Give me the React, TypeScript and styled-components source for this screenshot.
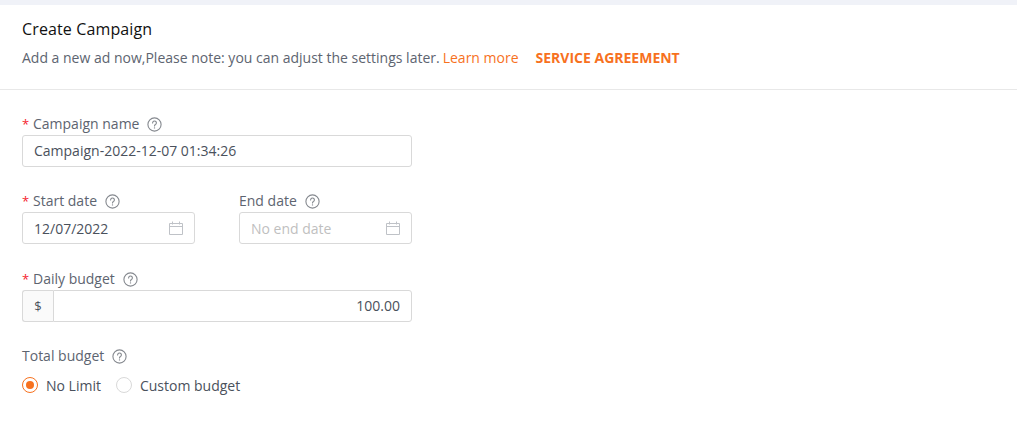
import { createGlobalStyle, styled } from "styled-components";

const GlobalStyle = createGlobalStyle`
  html, body { margin: 0; padding: 0; background: #fff; }
  body { font-family: "Open Sans", "Liberation Sans", sans-serif; font-size: 14px; color: #5d6470; }
`;

const Page = styled.div`
  width: 1017px;
  height: 422px;
  overflow: hidden;
  box-sizing: border-box;
  border-top: 5px solid #f0f2f8;
`;

const Header = styled.header`
  height: 85px;
  box-sizing: border-box;
  padding: 13px 22px 0;
  border-bottom: 1px solid #e8e8e8;
`;

const Title = styled.h1`
  margin: 0;
  font-size: 16px;
  font-weight: 400;
  line-height: 22px;
  letter-spacing: 0.13px;
  color: #111;
`;

const Subtitle = styled.p`
  margin: 7px 0 0;
  line-height: 22px;
  color: #5d6470;
`;

const Link = styled.a`
  color: #f7711e;
  margin-left: 3px;
`;

const Agreement = styled.a`
  color: #f7711e;
  font-weight: 700;
  margin-left: 17px;
`;

const Form = styled.form`
  width: 390px;
  padding: 23px 0 0 22px;
  display: flex;
  flex-direction: column;
  gap: 23px;
`;

const Row = styled.div`
  display: grid;
  grid-template-columns: 173px 173px;
  column-gap: 44px;
  margin-bottom: 1px;
`;

const Field = styled.div`
  display: flex;
  flex-direction: column;
`;

const Label = styled.label<{ $required?: boolean }>`
  display: flex;
  align-items: center;
  height: 22px;
  line-height: 22px;
  color: #5d6470;
  &::before {
    content: ${(p) => (p.$required ? '"*"' : "none")};
    color: #f5222d;
    width: 11px;
    font-size: 13px;
  }
`;

const HelpIcon = styled.svg`
  width: 15px;
  height: 15px;
  margin-left: 8px;
  color: #85898f;
`;

const InputBox = styled.div<{ $placeholder?: boolean; $right?: boolean; $date?: boolean }>`
  height: 32px;
  box-sizing: border-box;
  display: flex;
  align-items: center;
  justify-content: ${(p) => (p.$right ? "flex-end" : "space-between")};
  padding: ${(p) => (p.$date ? "1px 11px 0" : "0 11px")};
  border: 1px solid #d9d9d9;
  border-radius: 3px;
  line-height: 30px;
  color: ${(p) => (p.$placeholder ? "#bfbfbf" : "#4a515c")};
  background: #fff;
`;

const CalendarIcon = styled.svg`
  width: 14px;
  height: 14px;
  margin-top: -2px;
  color: #bfc2c7;
`;

const InputGroup = styled.div`
  display: flex;
  height: 32px;
`;

const Addon = styled.span`
  width: 31px;
  flex: none;
  box-sizing: border-box;
  display: flex;
  align-items: center;
  justify-content: center;
  background: #fafafa;
  border: 1px solid #d9d9d9;
  border-right: none;
  border-radius: 3px 0 0 3px;
  font-size: 13px;
  color: #4a515c;
`;

const GroupInput = styled(InputBox)`
  flex: 1;
  border-radius: 0 3px 3px 0;
`;

const Radios = styled.div`
  display: flex;
  align-items: center;
  height: 22px;
  margin-top: 7px;
`;

const RadioItem = styled.span`
  display: flex;
  align-items: center;
  margin-right: 15px;
  color: #4a515c;
`;

const RadioDot = styled.span<{ $checked?: boolean }>`
  width: 16px;
  height: 16px;
  box-sizing: border-box;
  margin-right: 8px;
  border-radius: 50%;
  border: 1px solid ${(p) => (p.$checked ? "#f7711e" : "#d9d9d9")};
  display: flex;
  align-items: center;
  justify-content: center;
  &::after {
    content: "";
    width: 8px;
    height: 8px;
    border-radius: 50%;
    background: ${(p) => (p.$checked ? "#f7711e" : "transparent")};
  }
`;

function Help() {
  return (
    <HelpIcon viewBox="0 0 15 15" fill="none" stroke="currentColor" strokeWidth="1.1">
      <circle cx="7.5" cy="7.5" r="6.6" />
      <path d="M5.6 5.9a1.9 1.9 0 1 1 2.9 1.6c-.7.4-1 .8-1 1.5" strokeLinecap="round" />
      <circle cx="7.5" cy="10.9" r=".7" fill="currentColor" stroke="none" />
    </HelpIcon>
  );
}

function Calendar() {
  return (
    <CalendarIcon viewBox="0 0 14 14" fill="none" stroke="currentColor">
      <path d="M.5 2.5h13v11H.5zM.5 5.5h13M3.5.5v3M10.5.5v3" />
    </CalendarIcon>
  );
}

export default function App() {
  return (
    <Page>
      <GlobalStyle />
      <Header>
        <Title>Create Campaign</Title>
        <Subtitle>
          Add a new ad now,Please note: you can adjust the settings later.
          <Link>Learn more</Link>
          <Agreement>SERVICE AGREEMENT</Agreement>
        </Subtitle>
      </Header>
      <Form>
        <Field>
          <Label $required>
            Campaign name
            <Help />
          </Label>
          <InputBox>Campaign-2022-12-07 01:34:26</InputBox>
        </Field>
        <Row>
          <Field>
            <Label $required>
              Start date
              <Help />
            </Label>
            <InputBox $date>
              12/07/2022
              <Calendar />
            </InputBox>
          </Field>
          <Field>
            <Label>
              End date
              <Help />
            </Label>
            <InputBox $date $placeholder>
              No end date
              <Calendar />
            </InputBox>
          </Field>
        </Row>
        <Field>
          <Label $required>
            Daily budget
            <Help />
          </Label>
          <InputGroup>
            <Addon>$</Addon>
            <GroupInput $right>100.00</GroupInput>
          </InputGroup>
        </Field>
        <Field>
          <Label>
            Total budget
            <Help />
          </Label>
          <Radios>
            <RadioItem>
              <RadioDot $checked />
              No Limit
            </RadioItem>
            <RadioItem>
              <RadioDot />
              Custom budget
            </RadioItem>
          </Radios>
        </Field>
      </Form>
    </Page>
  );
}
